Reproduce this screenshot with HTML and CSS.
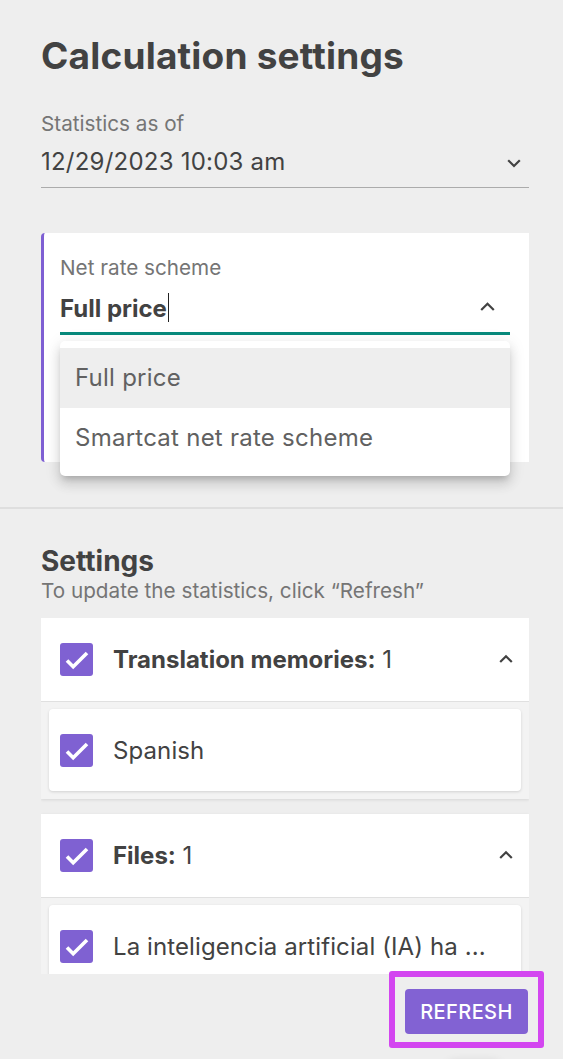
FILE: index.html
```html
<!DOCTYPE html>
<html lang="en">
<head>
<meta charset="utf-8">
<title>Calculation settings</title>
<link rel="stylesheet" href="styles.css">
</head>
<body>
<div class="screen">
  <section class="top">
    <h1 class="title">Calculation settings</h1>

    <div class="field">
      <div class="field-label">Statistics as of</div>
      <div class="field-row">
        <span class="field-value">12/29/2023 10:03 am</span>
        <svg class="chev chev-down" width="14" height="9" viewBox="0 0 14 9"><polyline points="1.2,1.2 7,7 12.8,1.2" fill="none" stroke="#424242" stroke-width="2.2"/></svg>
      </div>
    </div>

    <div class="scheme-card">
      <div class="field-label">Net rate scheme</div>
      <div class="select-row">
        <span class="select-value">Full price<span class="caret"></span></span>
        <svg class="chev chev-select" width="15" height="9" viewBox="0 0 15 9"><polyline points="1.2,8 7.5,1.7 13.8,8" fill="none" stroke="#424242" stroke-width="2.2"/></svg>
      </div>
      <ul class="menu">
        <li class="menu-item is-active">Full price</li>
        <li class="menu-item">Smartcat net rate scheme</li>
      </ul>
    </div>
  </section>

  <hr class="divider">

  <section class="settings">
    <h2 class="settings-title">Settings</h2>
    <p class="hint">To update the statistics, click “Refresh”</p>

    <div class="list">
      <div class="group">
        <div class="group-head">
          <svg class="cb" width="33" height="33" viewBox="0 0 33 33"><rect width="33" height="33" rx="3" fill="#7f61d2"/><polyline points="7,17.5 13.2,23.8 27,10" fill="none" stroke="#fff" stroke-width="3.6"/></svg>
          <span class="group-title"><b>Translation memories:</b> 1</span>
          <svg class="chev chev-up" width="14" height="9" viewBox="0 0 14 9"><polyline points="1.2,8 7,2.2 12.8,8" fill="none" stroke="#424242" stroke-width="2.2"/></svg>
        </div>
        <div class="group-body">
          <div class="item">
            <svg class="cb" width="33" height="33" viewBox="0 0 33 33"><rect width="33" height="33" rx="3" fill="#7f61d2"/><polyline points="7,17.5 13.2,23.8 27,10" fill="none" stroke="#fff" stroke-width="3.6"/></svg>
            <span class="item-text">Spanish</span>
          </div>
        </div>
      </div>

      <div class="group">
        <div class="group-head">
          <svg class="cb" width="33" height="33" viewBox="0 0 33 33"><rect width="33" height="33" rx="3" fill="#7f61d2"/><polyline points="7,17.5 13.2,23.8 27,10" fill="none" stroke="#fff" stroke-width="3.6"/></svg>
          <span class="group-title"><b>Files:</b> 1</span>
          <svg class="chev chev-up" width="14" height="9" viewBox="0 0 14 9"><polyline points="1.2,8 7,2.2 12.8,8" fill="none" stroke="#424242" stroke-width="2.2"/></svg>
        </div>
        <div class="group-body">
          <div class="item">
            <svg class="cb" width="33" height="33" viewBox="0 0 33 33"><rect width="33" height="33" rx="3" fill="#7f61d2"/><polyline points="7,17.5 13.2,23.8 27,10" fill="none" stroke="#fff" stroke-width="3.6"/></svg>
            <span class="item-text">La inteligencia artificial (IA) ha ...</span>
          </div>
        </div>
      </div>
    </div>

    <div class="actions">
      <button class="refresh" type="button">REFRESH</button>
      <div class="highlight"></div>
    </div>
  </section>

  <div class="float-shadow"></div>
</div>
</body>
</html>
```

FILE: styles.css
```css
* { box-sizing: border-box; }

html, body {
  margin: 0;
  padding: 0;
  background: #eeeeee;
}

body {
  font-family: Inter, "Noto Sans", "Liberation Sans", sans-serif;
  color: #424242;
}

.screen {
  position: relative;
  height: 1059px;
  overflow: hidden;
}

/* ---------- top ---------- */
.top {
  padding: 34px 34px 0 41px;
}

.title {
  margin: 0;
  font-size: 37px;
  line-height: 44px;
  font-weight: 700;
  letter-spacing: 0.2px;
  color: #424242;
}

.field {
  margin-top: 33px;
}

.field-label {
  font-size: 20.7px;
  line-height: 26px;
  color: #757575;
}

.field-row {
  margin-top: 9px;
  display: flex;
  align-items: center;
  justify-content: space-between;
  padding: 0 8px 9px 0;
  border-bottom: 1px solid #ababab;
}

.field-value {
  font-size: 24px;
  line-height: 32px;
  letter-spacing: 0.225px;
  color: #424242;
}

.chev { display: block; flex: none; }
.chev-down { margin-top: 3px; }

/* ---------- scheme card ---------- */
.scheme-card {
  position: relative;
  margin-top: 45px;
  height: 229px;
  background: #ffffff;
  border-left: 3px solid #7e5fd3;
  border-radius: 4px 0 0 4px;
  padding: 22px 19px 0 16px;
}

.select-row {
  margin-top: 12px;
  display: flex;
  align-items: center;
  justify-content: space-between;
  padding: 0 15px 7px 0;
  border-bottom: 3px solid #088a7c;
}

.select-value {
  font-size: 24px;
  line-height: 32px;
  font-weight: 700;
  color: #424242;
}

.caret {
  display: inline-block;
  width: 1.5px;
  height: 29px;
  margin-left: 1px;
  background: #222;
  vertical-align: -5px;
}

.chev-select { margin-top: -6px; }

.menu {
  position: absolute;
  top: 108px;
  left: 16px;
  width: 450px;
  margin: 0;
  padding: 7px 0 8px;
  list-style: none;
  background: #ffffff;
  border-radius: 5px;
  box-shadow: 0 5px 6px -3px rgba(0,0,0,.18), 0 8px 12px 1px rgba(0,0,0,.10), 0 3px 16px 2px rgba(0,0,0,.08);
}

.menu-item {
  height: 60px;
  line-height: 60px;
  padding-left: 15px;
  font-size: 24px;
  letter-spacing: 0.25px;
  color: #616161;
}

.menu-item.is-active { background: #eeeeee; }

/* ---------- divider ---------- */
.divider {
  margin: 45px 0 0;
  height: 2px;
  border: 0;
  background: #dedede;
}

/* ---------- settings ---------- */
.settings {
  position: relative;
  padding: 36px 34px 0 41px;
}

.settings-title {
  margin: 0;
  font-size: 28px;
  line-height: 32px;
  font-weight: 700;
  color: #424242;
}

.hint {
  margin: 1px 0 0;
  font-size: 20.7px;
  line-height: 26px;
  color: #757575;
}

.list {
  margin-top: 14px;
  height: 356px;
  overflow: hidden;
}

.group {
  background: #f3f3f3;
  box-shadow: 0 1px 3px rgba(0,0,0,.10);
  margin-bottom: 15px;
}

.group-head {
  height: 84px;
  display: flex;
  align-items: center;
  padding: 0 16px 0 19px;
  background: #ffffff;
  border-bottom: 1px solid #e0e0e0;
}

.cb { display: block; flex: none; }

.group-title {
  margin-left: 20px;
  font-size: 24px;
  color: #424242;
}

.group-title b { font-weight: 700; }

.chev-up { margin-left: auto; margin-top: -2px; }

.group-body {
  padding: 7px 8px 8px;
}

.item {
  height: 82px;
  display: flex;
  align-items: center;
  padding-left: 11px;
  background: #ffffff;
  border-radius: 4px;
  box-shadow: 0 1px 3px rgba(0,0,0,.14);
}

.item-text {
  margin-left: 20px;
  font-size: 24px;
  letter-spacing: 0.1px;
  color: #424242;
  white-space: nowrap;
}

/* ---------- actions ---------- */
.actions {
  position: relative;
  display: flex;
  justify-content: flex-end;
  padding: 15px 1px 0 0;
}

.refresh {
  width: 123px;
  height: 45px;
  border: 0;
  border-radius: 4px;
  background: #8262d3;
  color: #ffffff;
  font-family: Inter, "Noto Sans", "Liberation Sans", sans-serif;
  font-size: 20px;
  font-weight: 500;
  letter-spacing: 0.4px;
  padding: 0;
  cursor: pointer;
}

.highlight {
  position: absolute;
  top: -3.5px;
  right: -14.5px;
  width: 155px;
  height: 77px;
  border: 6.5px solid #d346f0;
  border-radius: 3px;
  pointer-events: none;
}

.float-shadow {
  position: absolute;
  left: 448px;
  top: 1064px;
  width: 52px;
  height: 30px;
  border-radius: 8px;
  background: #eeeeee;
  box-shadow: 0 0 10px 3px rgba(0,0,0,.10);
}
```
